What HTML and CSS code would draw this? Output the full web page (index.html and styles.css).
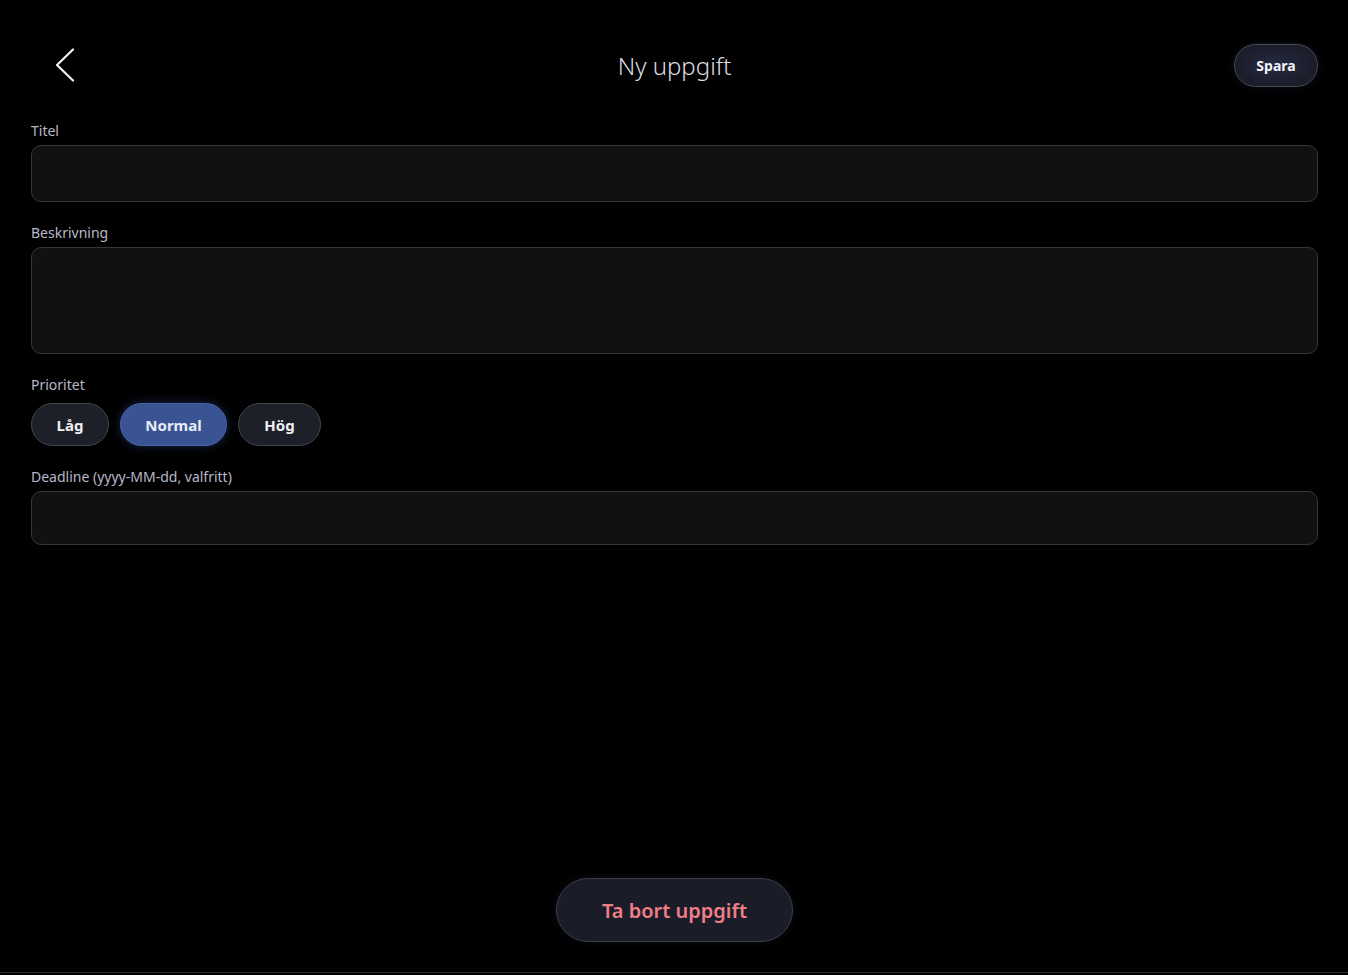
FILE: index.html
```html
<!DOCTYPE html>
<html lang="sv">
<head>
<meta charset="utf-8">
<title>Ny uppgift</title>
<link rel="stylesheet" href="styles.css">
</head>
<body>
<div class="page">
  <header class="topbar">
    <button class="back" aria-label="Tillbaka">
      <svg width="22" height="34" viewBox="0 0 22 34"><path d="M19 1.5 L3 17 L19 32.5" fill="none" stroke="#f2f2f2" stroke-width="2.2" stroke-linecap="round" stroke-linejoin="round"/></svg>
    </button>
    <h1 class="title">Ny uppgift</h1>
    <button class="save">Spara</button>
  </header>

  <form class="form">
    <label class="field">
      <span class="label">Titel</span>
      <input class="input input-title" type="text">
    </label>
    <label class="field">
      <span class="label">Beskrivning</span>
      <textarea class="input input-desc"></textarea>
    </label>
    <div class="field">
      <span class="label">Prioritet</span>
      <div class="chips">
        <button type="button" class="chip chip-low">Låg</button>
        <button type="button" class="chip chip-normal active">Normal</button>
        <button type="button" class="chip chip-high">Hög</button>
      </div>
    </div>
    <label class="field">
      <span class="label">Deadline (yyyy-MM-dd, valfritt)</span>
      <input class="input input-date" type="text">
    </label>
  </form>

  <div class="footer">
    <button class="delete">Ta bort uppgift</button>
  </div>
</div>
</body>
</html>
```

FILE: styles.css
```css
* { box-sizing: border-box; }
html, body { margin: 0; padding: 0; background: #000; }
body {
  font-family: "Noto Sans", "Open Sans", sans-serif;
  color: #eee;
  height: 975px;
  overflow: hidden;
}
.page {
  height: 973px;
  border-bottom: 1px solid #2e2e2e;
  display: flex;
  flex-direction: column;
  padding: 0 30px 0 31px;
}
.topbar {
  height: 121px;
  display: flex;
  align-items: flex-start;
  justify-content: space-between;
  position: relative;
}
.back {
  background: none;
  border: 0;
  padding: 0;
  margin-left: 23px;
  margin-top: 48px;
  width: 22px;
  height: 34px;
  cursor: pointer;
}
.title {
  position: absolute;
  left: 0; right: 0;
  top: 48px;
  margin: 0;
  text-align: center;
  font-weight: 300;
  font-size: 24px;
  line-height: 36px;
  color: #dcdde2;
  pointer-events: none;
}
.save {
  width: 84px;
  height: 43px;
  margin-top: 44px;
  border-radius: 22px;
  border: 1px solid #4a4c55;
  background: radial-gradient(ellipse at center, #262b44 0%, #1b1d29 70%);
  color: #f4f4f6;
  font-family: inherit;
  font-weight: 700;
  font-size: 14px;
  box-shadow: 0 0 8px rgba(40,50,90,0.35);
}
.form {
  display: flex;
  flex-direction: column;
  gap: 21px;
}
.field {
  display: flex;
  flex-direction: column;
  gap: 4px;
}
.label {
  font-size: 14px;
  line-height: 20px;
  color: #b6b9c8;
}
.input {
  display: block;
  width: 100%;
  background: #111111;
  border: 1px solid #363636;
  border-radius: 10px;
  color: #eee;
  font-family: inherit;
  font-size: 15px;
  padding: 10px 14px;
  outline: none;
  resize: none;
}
.input-title { height: 57px; }
.input-desc { height: 107px; }
.input-date { height: 54px; }
.chips {
  display: flex;
  gap: 11px;
  margin-top: 4px;
}
.chip {
  height: 43px;
  border-radius: 22px;
  border: 1px solid #44464e;
  background: #1e2029;
  color: #f0f0f3;
  font-family: inherit;
  font-weight: 700;
  font-size: 15px;
  padding: 0;
}
.chip-low { width: 78px; }
.chip-normal { width: 107px; }
.chip-high { width: 83px; }
.chip.active {
  background: #3a5392;
  border-color: #4a64a6;
  color: #e8ecf6;
  box-shadow: 0 0 10px rgba(60,90,170,0.45);
}
.footer {
  margin-top: auto;
  display: flex;
  justify-content: center;
  padding-bottom: 30px;
}
.delete {
  width: 237px;
  height: 64px;
  border-radius: 32px;
  border: 1px solid #3c3e48;
  background: #1a1c27;
  color: #ef7f86;
  font-family: inherit;
  font-weight: 600;
  font-size: 20px;
  box-shadow: 0 0 8px rgba(40,45,80,0.3);
}
```
